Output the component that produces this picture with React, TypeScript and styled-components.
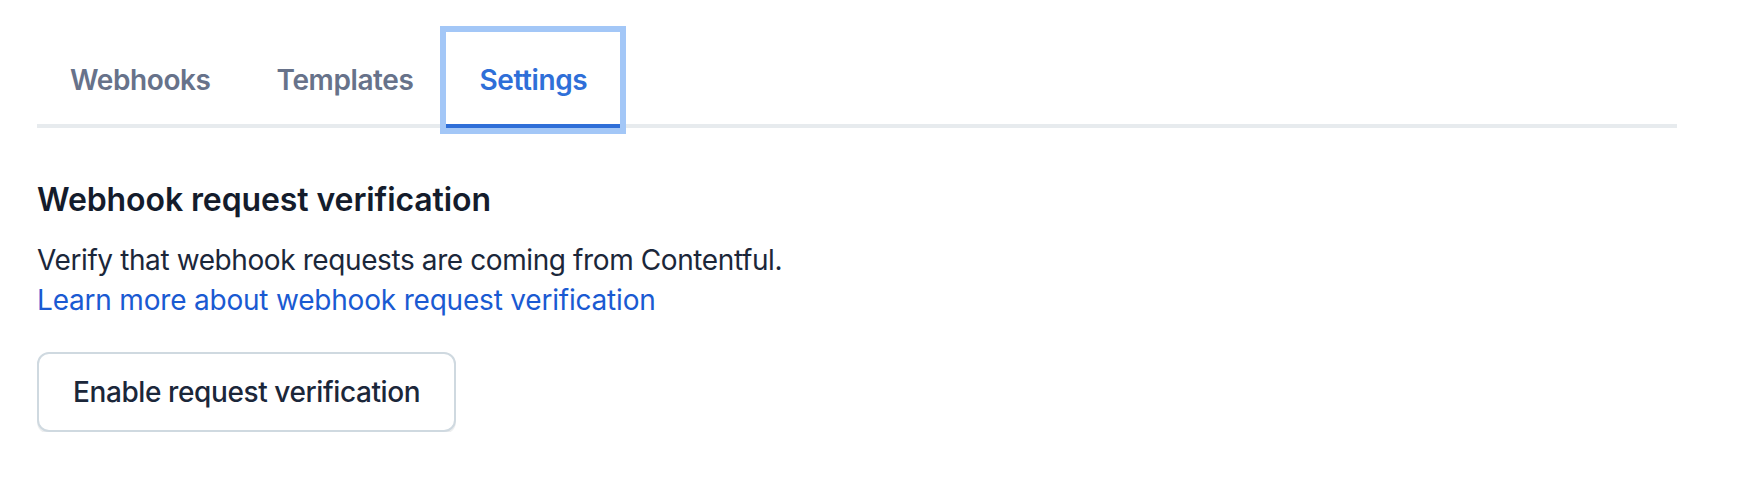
import React from "react";
import styled, { createGlobalStyle } from "styled-components";

const GlobalStyle = createGlobalStyle`
  html, body {
    margin: 0;
    padding: 0;
    background: #fff;
  }
  body {
    font-family: Inter, "Noto Sans", "Liberation Sans", sans-serif;
    -webkit-font-smoothing: antialiased;
  }
`;

const Page = styled.div`
  padding: 32px 67px 0 37px;
`;

const TabList = styled.div`
  display: flex;
  box-shadow: inset 0 -4px 0 #e7ebee;
`;

const Tab = styled.button<{ $active?: boolean }>`
  display: flex;
  align-items: center;
  height: 96px;
  padding: 0 33px;
  border: none;
  background: transparent;
  font-family: inherit;
  font-size: 28px;
  font-weight: 600;
  letter-spacing: -0.4px;
  color: ${(p) => (p.$active ? "#2f6fd8" : "#67728a")};
  box-shadow: ${(p) =>
    p.$active ? "inset 0 -4px 0 #2f6fd8, 0 0 0 6px #a3c7f7" : "none"};
  cursor: pointer;
`;

const Section = styled.section`
  padding-top: 48px;
`;

const Heading = styled.h2`
  margin: 0 0 16px;
  font-size: 32px;
  line-height: 48px;
  font-weight: 600;
  letter-spacing: -0.1px;
  color: #141c2c;
`;

const Text = styled.p`
  margin: 0;
  font-size: 28px;
  line-height: 40px;
  letter-spacing: -0.4px;
  color: #1b273a;
`;

const TextLink = styled.a`
  display: block;
  font-size: 28px;
  line-height: 40px;
  letter-spacing: -0.2px;
  color: #1a5ad2;
  text-decoration: none;
`;

const Button = styled.button`
  margin-top: 32px;
  height: 80px;
  padding: 0 34px;
  border: 2px solid #cfd9e0;
  border-radius: 12px;
  background: #fff;
  box-shadow: 0 2px 0 rgba(25, 37, 50, 0.08);
  font-family: inherit;
  font-size: 28px;
  font-weight: 500;
  letter-spacing: -0.4px;
  color: #1b273a;
  cursor: pointer;
`;

export default function App() {
  return (
    <Page>
      <GlobalStyle />
      <TabList>
        <Tab>Webhooks</Tab>
        <Tab>Templates</Tab>
        <Tab $active>Settings</Tab>
      </TabList>
      <Section>
        <Heading>Webhook request verification</Heading>
        <Text>Verify that webhook requests are coming from Contentful.</Text>
        <TextLink href="#">Learn more about webhook request verification</TextLink>
        <Button>Enable request verification</Button>
      </Section>
    </Page>
  );
}
